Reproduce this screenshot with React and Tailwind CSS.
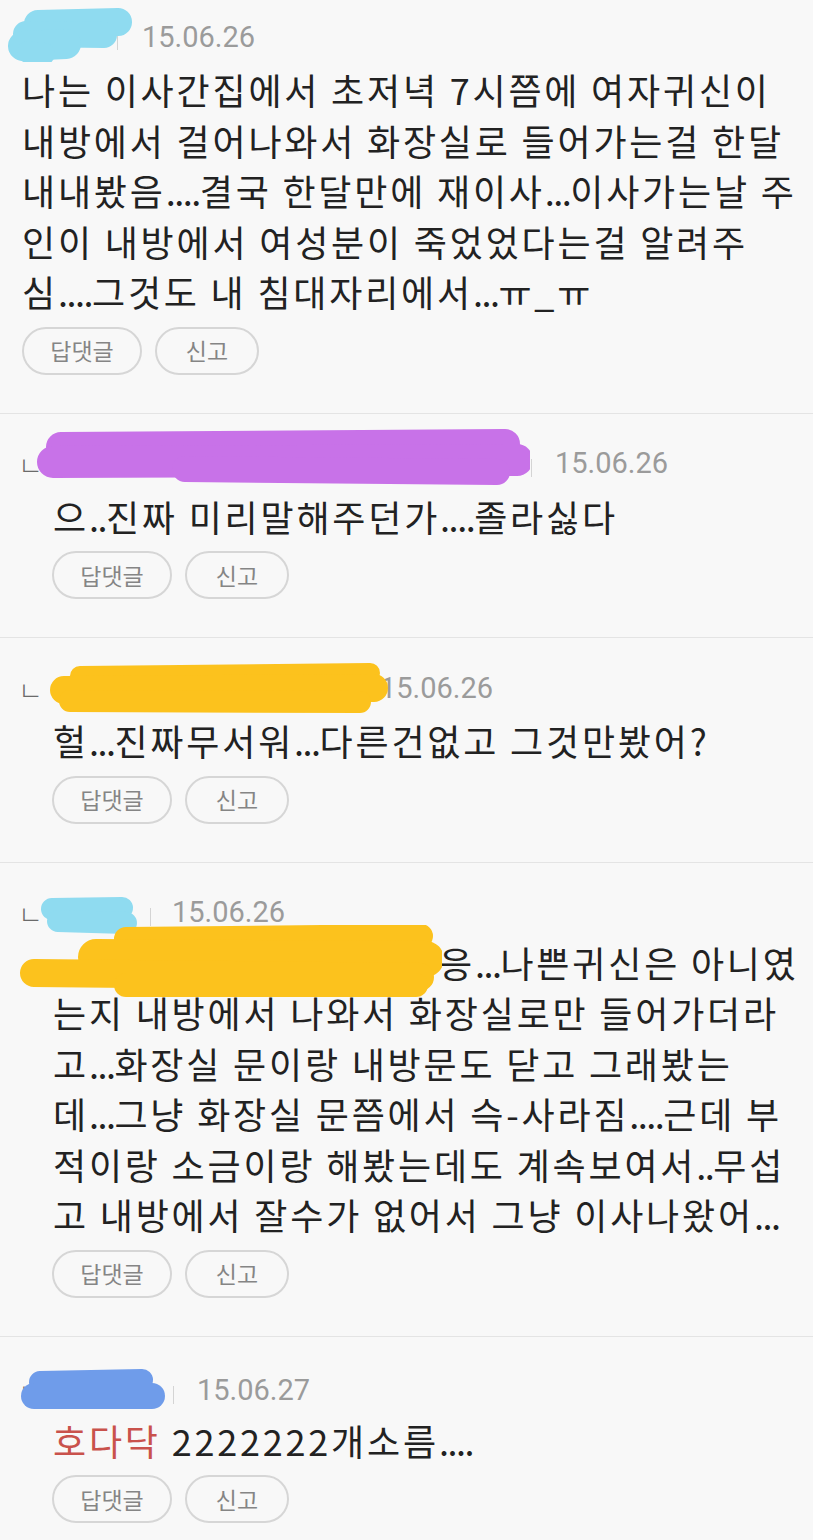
const KR = { fontFamily: '"Noto Sans CJK KR", "Noto Sans", sans-serif' };

// marker scribbles that hide the nicknames
function Scribble({ className, w, h, color, strokes }) {
  return (
    <svg
      className={`pointer-events-none absolute z-10 ${className}`}
      width={w}
      height={h}
      viewBox={`0 0 ${w} ${h}`}
      aria-hidden="true"
    >
      {strokes.map(([x1, y1, x2, y2, sw], i) => (
        <line key={i} x1={x1} y1={y1} x2={x2} y2={y2} stroke={color} strokeWidth={sw} strokeLinecap="round" />
      ))}
    </svg>
  );
}

// hangul in the source font runs wider than the dots, so dots are pulled tighter
function Dots({ text }) {
  return text.split(/(\.+)/).map((part, i) =>
    /^\.+$/.test(part) ? (
      <span key={i} className="tracking-[-1.5px]">
        {part}
      </span>
    ) : (
      part
    )
  );
}

function Header({ reply, spacer, dateGap, date }) {
  return (
    <div className="flex h-[40px] items-center">
      {reply && (
        <span className="mt-[2px] w-[20px] text-[27px] font-light leading-none text-[#6b6b6b]" style={KR}>
          ㄴ
        </span>
      )}
      <span className={`shrink-0 ${spacer}`} />
      <span className="mt-[8px] h-[18px] w-px bg-[#d4d4d4]" />
      <span className={`text-[29px] leading-none text-[#9b9b9b] font-['Roboto'] ${dateGap}`}>{date}</span>
    </div>
  );
}

function Buttons({ className }) {
  return (
    <div className={`mt-[10px] flex gap-[13px] ${className}`} style={KR}>
      <button className="flex h-[48px] w-[120px] items-center justify-center rounded-full border-2 border-[#d6d6d6] text-[23px] text-[#858585]">
        답댓글
      </button>
      <button className="flex h-[48px] w-[104px] items-center justify-center rounded-full border-2 border-[#d6d6d6] text-[23px] text-[#858585]">
        신고
      </button>
    </div>
  );
}

function Body({ lines, className = "" }) {
  return (
    <div className={`text-[36px] leading-[50.5px] tracking-[2.8px] text-[#222] ${className}`} style={KR}>
      {lines.map((line, i) => (
        <div key={i} className="whitespace-nowrap">
          {typeof line === "string" ? <Dots text={line} /> : line}
        </div>
      ))}
    </div>
  );
}

export default function App() {
  return (
    <div className="h-[1540px] w-[813px] overflow-hidden bg-[#f8f8f8]">
      {/* comment 1 */}
      <div className="relative px-[18px] pb-[38px] pt-[17px]">
        <Scribble
          className="left-[8px] top-[8px]"
          w={124}
          h={54}
          color="#8fdbf0"
          strokes={[
            [30, 16, 110, 14, 28],
            [18, 26, 96, 27, 26],
            [15, 38, 58, 36, 30],
            [20, 44, 36, 46, 22],
          ]}
        />
        <Header spacer="w-[99px]" dateGap="ml-[24px]" date="15.06.26" />
        <Body
          className="mt-[7px] pl-[4px]"
          lines={[
            "나는 이사간집에서 초저녁 7시쯤에 여자귀신이",
            "내방에서 걸어나와서 화장실로 들어가는걸 한달",
            "내내봤음....결국 한달만에 재이사...이사가는날 주",
            "인이 내방에서 여성분이 죽었었다는걸 알려주",
            "심....그것도 내 침대자리에서...ㅠ_ㅠ",
          ]}
        />
        <Buttons className="pl-[4px]" />
      </div>

      {/* comment 2 */}
      <div className="relative border-t border-[#e4e4e4] px-[18px] pb-[38px] pt-[30px]">
        <Scribble
          className="left-[35px] top-[15px]"
          w={495}
          h={58}
          color="#c872e8"
          strokes={[
            [26, 18, 470, 15, 30],
            [18, 33, 482, 31, 32],
            [150, 40, 462, 43, 26],
          ]}
        />
        <Header reply spacer="w-[493px]" dateGap="ml-[23px]" date="15.06.26" />
        <Body className="mt-[7px] pl-[35px]" lines={["으..진짜 미리말해주던가....졸라싫다"]} />
        <Buttons className="pl-[34px]" />
      </div>

      {/* comment 3 */}
      <div className="relative border-t border-[#e4e4e4] px-[18px] pb-[38px] pt-[30px]">
        <Scribble
          className="left-[50px] top-[25px]"
          w={338}
          h={52}
          color="#fcc21d"
          strokes={[
            [30, 13, 320, 10, 20],
            [14, 27, 324, 25, 28],
            [20, 38, 310, 39, 22],
          ]}
        />
        <Header reply spacer="w-[334px]" dateGap="ml-[7px]" date="15.06.26" />
        <Body className="mt-[7px] pl-[35px]" lines={["헐...진짜무서워...다른건없고 그것만봤어?"]} />
        <Buttons className="pl-[34px]" />
      </div>

      {/* comment 4 */}
      <div className="relative border-t border-[#e4e4e4] px-[18px] pb-[38px] pt-[30px]">
        <Scribble
          className="left-[38px] top-[33px]"
          w={100}
          h={40}
          color="#8fdbf0"
          strokes={[
            [14, 13, 84, 12, 22],
            [20, 25, 88, 27, 22],
          ]}
        />
        <Scribble
          className="left-[16px] top-[62px]"
          w={426}
          h={80}
          color="#fcc21d"
          strokes={[
            [110, 14, 405, 11, 24],
            [80, 32, 410, 34, 36],
            [18, 48, 404, 52, 28],
            [110, 60, 400, 60, 24],
          ]}
        />
        <Header reply spacer="w-[112px]" dateGap="ml-[21px]" date="15.06.26" />
        <Body
          className="mt-[4px] pl-[35px]"
          lines={[
            <>
              <span className="inline-block w-[386px]" />
              <Dots text="응...나쁜귀신은 아니였" />
            </>,
            "는지 내방에서 나와서 화장실로만 들어가더라",
            "고...화장실 문이랑 내방문도 닫고 그래봤는",
            "데...그냥 화장실 문쯤에서 슥-사라짐....근데 부",
            "적이랑 소금이랑 해봤는데도 계속보여서..무섭",
            "고 내방에서 잘수가 없어서 그냥 이사나왔어...",
          ]}
        />
        <Buttons className="pl-[34px]" />
      </div>

      {/* comment 5 */}
      <div className="relative border-t border-[#e4e4e4] px-[18px] pb-[38px] pt-[34px]">
        <Scribble
          className="left-[20px] top-[31px]"
          w={148}
          h={44}
          color="#6f9cea"
          strokes={[
            [20, 14, 122, 12, 22],
            [14, 28, 132, 28, 26],
          ]}
        />
        <Header reply spacer="w-[135px]" dateGap="ml-[23px]" date="15.06.27" />
        <Body
          className="mt-[4px] pl-[35px]"
          lines={[
            <>
              <span className="text-[#c9524c]">호다닥</span> <Dots text="2222222개소름...." />
            </>,
          ]}
        />
        <Buttons className="pl-[34px]" />
      </div>
    </div>
  );
}
